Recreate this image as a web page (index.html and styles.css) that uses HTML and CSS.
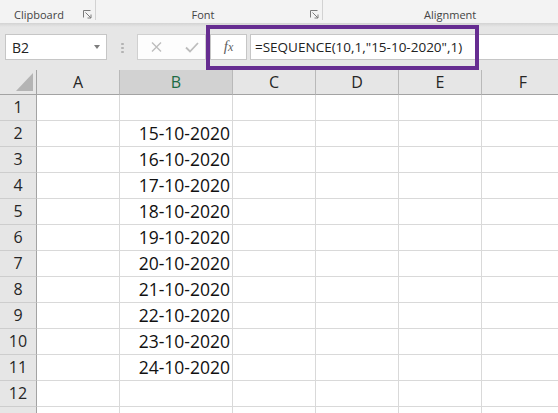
FILE: index.html
```html
<!DOCTYPE html>
<html lang="en">
<head>
    <meta charset="UTF-8">
    <meta name="viewport" content="width=device-width, initial-scale=1.0">
    <title>SEQUENCE dates</title>
    <link rel="stylesheet" href="styles.css">
</head>
<body>
    <!-- Ribbon group labels -->
    <div class="ribbon">
        <div class="group clipboard">
            <span class="label">Clipboard</span>
            <svg class="launcher" width="9" height="9" viewBox="0 0 9 9"><path d="M0.5 7.5V0.5H7.5M2.5 2.5L8 8M8 4.5V8H4.5" fill="none" stroke="#7a7a7a" stroke-width="1"/></svg>
        </div>
        <div class="group font">
            <span class="label">Font</span>
            <svg class="launcher" width="9" height="9" viewBox="0 0 9 9"><path d="M0.5 7.5V0.5H7.5M2.5 2.5L8 8M8 4.5V8H4.5" fill="none" stroke="#7a7a7a" stroke-width="1"/></svg>
        </div>
        <div class="group alignment">
            <span class="label">Alignment</span>
        </div>
    </div>

    <!-- Name box + formula bar -->
    <div class="formula-bar">
        <div class="name-box"><span>B2</span><span class="caret"></span></div>
        <div class="grip"></div>
        <div class="edit-buttons">
            <svg width="11" height="10" viewBox="0 0 11 10"><path d="M1 0.5L10 9.5M10 0.5L1 9.5" stroke="#bdbdbd" stroke-width="1.4"/></svg>
            <svg width="14" height="11" viewBox="0 0 14 11"><path d="M1 5.5L5 9.5L13 1" fill="none" stroke="#bdbdbd" stroke-width="1.8"/></svg>
        </div>
        <div class="fx-button"><i>f</i><i class="x">x</i></div>
        <div class="formula-input">=SEQUENCE(10,1,"15-10-2020",1)</div>
        <div class="highlight"></div>
    </div>

    <!-- Worksheet grid -->
    <div class="sheet">
        <div class="corner"><svg width="17" height="18" viewBox="0 0 17 18"><polygon points="17,0 17,18 0,18" fill="#b4b4b4"/></svg></div>
        <div class="col-head">A</div><div class="col-head active">B</div><div class="col-head">C</div><div class="col-head">D</div><div class="col-head">E</div><div class="col-head">F</div>

        <div class="row-head">1</div><div class="cell"></div><div class="cell"></div><div class="cell"></div><div class="cell"></div><div class="cell"></div><div class="cell"></div>
        <div class="row-head">2</div><div class="cell"></div><div class="cell">15-10-2020</div><div class="cell"></div><div class="cell"></div><div class="cell"></div><div class="cell"></div>
        <div class="row-head">3</div><div class="cell"></div><div class="cell">16-10-2020</div><div class="cell"></div><div class="cell"></div><div class="cell"></div><div class="cell"></div>
        <div class="row-head">4</div><div class="cell"></div><div class="cell">17-10-2020</div><div class="cell"></div><div class="cell"></div><div class="cell"></div><div class="cell"></div>
        <div class="row-head">5</div><div class="cell"></div><div class="cell">18-10-2020</div><div class="cell"></div><div class="cell"></div><div class="cell"></div><div class="cell"></div>
        <div class="row-head">6</div><div class="cell"></div><div class="cell">19-10-2020</div><div class="cell"></div><div class="cell"></div><div class="cell"></div><div class="cell"></div>
        <div class="row-head">7</div><div class="cell"></div><div class="cell">20-10-2020</div><div class="cell"></div><div class="cell"></div><div class="cell"></div><div class="cell"></div>
        <div class="row-head">8</div><div class="cell"></div><div class="cell">21-10-2020</div><div class="cell"></div><div class="cell"></div><div class="cell"></div><div class="cell"></div>
        <div class="row-head">9</div><div class="cell"></div><div class="cell">22-10-2020</div><div class="cell"></div><div class="cell"></div><div class="cell"></div><div class="cell"></div>
        <div class="row-head">10</div><div class="cell"></div><div class="cell">23-10-2020</div><div class="cell"></div><div class="cell"></div><div class="cell"></div><div class="cell"></div>
        <div class="row-head">11</div><div class="cell"></div><div class="cell">24-10-2020</div><div class="cell"></div><div class="cell"></div><div class="cell"></div><div class="cell"></div>
        <div class="row-head">12</div><div class="cell"></div><div class="cell"></div><div class="cell"></div><div class="cell"></div><div class="cell"></div><div class="cell"></div>
        <div class="row-head"></div><div class="cell"></div><div class="cell"></div><div class="cell"></div><div class="cell"></div><div class="cell"></div><div class="cell"></div>
    </div>
</body>
</html>
```

FILE: styles.css
```css
body {
    margin: 0;
    width: 558px;
    height: 413px;
    overflow: hidden;
    font-family: "Open Sans", Arial, sans-serif;
    background: #e6e6e6;
    color: #222;
}

/* Ribbon */
.ribbon {
    display: flex;
    height: 23px;
    background: #f3f3f3;
}

.group {
    display: flex;
    align-items: flex-end;
    height: 20px;
    box-sizing: border-box;
    border-right: 1px solid #d2d2d2;
}

.clipboard {
    width: 96px;
}

.font {
    width: 227px;
}

.alignment {
    flex: 1;
    border-right: none;
}

.label {
    font-size: 11px;
    line-height: 16px;
    color: #444;
    margin-bottom: -3px;
}

.clipboard .label {
    padding-left: 14px;
}

.font .label {
    flex: 1;
    text-align: center;
}

.alignment .label {
    padding-left: 101px;
}

.launcher {
    margin-left: auto;
    margin-right: 3px;
    margin-bottom: 1px;
}

/* Formula bar */
.formula-bar {
    position: relative;
    display: flex;
    align-items: flex-start;
    height: 47px;
    box-sizing: border-box;
    padding-top: 11px;
    background: linear-gradient(#d3d3d3, #e6e6e6 4px);
}

.name-box,
.edit-buttons,
.fx-button,
.formula-input {
    height: 26px;
    box-sizing: border-box;
    border: 1px solid #c6c6c6;
    background: #fff;
}

.name-box {
    display: flex;
    align-items: center;
    justify-content: space-between;
    width: 102px;
    margin-left: 5px;
    padding: 0 6px;
    font-size: 14px;
}

.caret {
    width: 0;
    height: 0;
    border-left: 3.5px solid transparent;
    border-right: 3.5px solid transparent;
    border-top: 4px solid #7d7d7d;
}

.grip {
    width: 3px;
    height: 12px;
    margin: 8px 0 0 14px;
    background: radial-gradient(circle, #b3b3b3 1px, transparent 1.5px) 0 0 / 3px 4px;
}

.edit-buttons {
    display: flex;
    align-items: center;
    gap: 23px;
    width: 69px;
    margin-left: 13px;
    padding-left: 13px;
    border-color: #d0d0d0;
    background: #fdfdfd;
}

.fx-button {
    width: 37px;
    margin-left: 4px;
    text-align: center;
    font-family: "Liberation Serif", "Times New Roman", serif;
    font-size: 15px;
    line-height: 23px;
    color: #5f5f5f;
}

.fx-button .x {
    font-size: 12px;
}

.formula-input {
    flex: 1;
    margin-left: 3px;
    padding-left: 4px;
    border-right: none;
    font-size: 13.5px;
    line-height: 24px;
    white-space: nowrap;
}

/* purple callout around the formula */
.highlight {
    position: absolute;
    left: 206px;
    top: 2px;
    width: 273px;
    height: 45px;
    box-sizing: border-box;
    border: 4px solid #662d91;
}

/* Worksheet grid */
.sheet {
    display: grid;
    grid-template-columns: 37px 83px 113px 83px 83px 83px 83px;
    grid-template-rows: 25px;
    grid-auto-rows: 26px;
    width: max-content;
}

.sheet > div {
    box-sizing: border-box;
}

.corner {
    display: flex;
    align-items: flex-end;
    justify-content: flex-end;
    padding: 0 3px 3px 0;
    background: #e6e6e6;
    border-right: 1px solid #a3a3a3;
    border-bottom: 1px solid #a3a3a3;
}

.col-head {
    background: #e6e6e6;
    border-right: 1px solid #b9b9b9;
    border-bottom: 1px solid #a3a3a3;
    text-align: center;
    font-size: 16px;
    line-height: 24px;
    color: #262626;
}

.col-head.active {
    background: #d2d2d2;
    color: #1d6b45;
}

.row-head {
    background: #e6e6e6;
    border-right: 1px solid #a3a3a3;
    border-bottom: 1px solid #cdcdcd;
    text-align: center;
    font-size: 16px;
    line-height: 25px;
    color: #262626;
}

.cell {
    background: #fff;
    border-right: 1px solid #d9d9d9;
    border-bottom: 1px solid #d9d9d9;
    padding-right: 2px;
    text-align: right;
    font-size: 17.5px;
    line-height: 25px;
    color: #111;
}
```
